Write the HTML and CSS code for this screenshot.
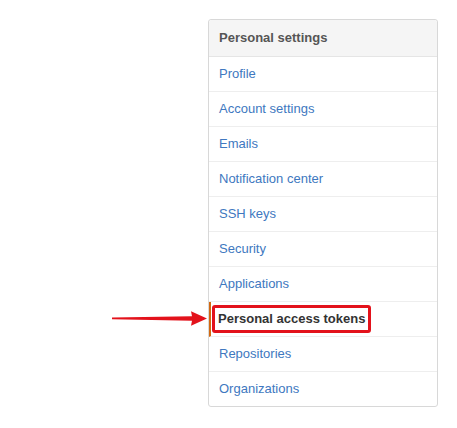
FILE: index.html
```html
<!DOCTYPE html>
<html>
<head>
<meta charset="utf-8">
<link rel="stylesheet" href="styles.css">
</head>
<body>
<div class="page">
  <div class="arrow-col">
    <svg class="arrow" width="96" height="20" viewBox="0 0 96 20">
      <path d="M0 8.6 L80 7.2 L79 2.2 L95 9.5 L79 16.8 L80 11.8 L0 10.2 Z" fill="#e3121b"/>
    </svg>
  </div>
  <nav class="menu">
    <div class="menu-heading">Personal settings</div>
    <a class="menu-item" href="#">Profile</a>
    <a class="menu-item" href="#">Account settings</a>
    <a class="menu-item" href="#">Emails</a>
    <a class="menu-item" href="#">Notification center</a>
    <a class="menu-item" href="#">SSH keys</a>
    <a class="menu-item" href="#">Security</a>
    <a class="menu-item" href="#">Applications</a>
    <a class="menu-item selected" href="#"><span class="highlight">Personal access tokens</span></a>
    <a class="menu-item" href="#">Repositories</a>
    <a class="menu-item" href="#">Organizations</a>
  </nav>
</div>
</body>
</html>
```
FILE: styles.css
```css
html, body {
  margin: 0;
  padding: 0;
  background: #fff;
}
body {
  font-family: "Liberation Sans", Arial, Helvetica, sans-serif;
  font-size: 13px;
}
.page {
  display: flex;
  padding: 19px 0 0 112px;
}
.arrow-col {
  width: 96px;
  position: relative;
}
.arrow {
  position: absolute;
  left: 0;
  top: 290px;
}
.menu {
  width: 228px;
  border: 1px solid #d8d8d8;
  border-radius: 3px;
  display: flex;
  flex-direction: column;
}
.menu-heading {
  height: 36px;
  line-height: 35px;
  padding-left: 10px;
  background: #f5f5f5;
  color: #555;
  font-weight: bold;
  border-bottom: 1px solid #e5e5e5;
  border-radius: 3px 3px 0 0;
}
.menu-item {
  height: 34px;
  line-height: 33px;
  padding-left: 10px;
  color: #4078c0;
  text-decoration: none;
  border-bottom: 1px solid #eee;
}
.menu-item:last-child {
  border-bottom: none;
}
.menu-item.selected {
  color: #333;
  font-weight: bold;
  padding-left: 8px;
  border-left: 2px solid #d26911;
  display: flex;
  align-items: center;
}
.highlight {
  display: inline-block;
  line-height: 18px;
  border: 3px solid #e3121b;
  border-radius: 3px;
  padding: 2px 3px;
  margin-left: -7px;
}
```
